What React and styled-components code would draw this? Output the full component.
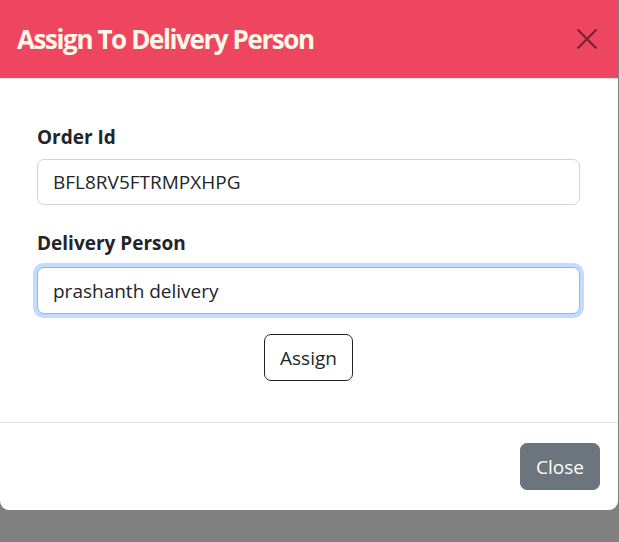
import React from 'react';
import styled, { createGlobalStyle } from 'styled-components';

const GlobalStyle = createGlobalStyle`
  html, body {
    margin: 0;
    padding: 0;
    background: #808080;
    font-family: "Open Sans", "Noto Sans", sans-serif;
    color: #212529;
  }
  * { box-sizing: border-box; }
`;

const Page = styled.div`
  width: 619px;
  height: 542px;
  background: #808080;
`;

const Modal = styled.div`
  width: 618px;
  background: #fff;
  border-radius: 0 0 9px 9px;
  overflow: hidden;
`;

const Header = styled.header`
  height: 79px;
  background: #ee4661;
  border-bottom: 1px solid #dee2e6;
  display: flex;
  align-items: center;
  justify-content: space-between;
  padding: 0 18px 0 17px;
`;

const Title = styled.h3`
  margin: 0;
  font-size: 26px;
  font-weight: 700;
  color: #fff8e6;
  letter-spacing: -1.4px;
`;

const CloseX = styled.button`
  width: 26px;
  height: 26px;
  padding: 0;
  border: 0;
  background: none;
  display: flex;
  align-items: center;
  justify-content: center;
  cursor: pointer;
  svg { display: block; }
`;

const Body = styled.form`
  padding: 44px 38px 41px 37px;
  display: flex;
  flex-direction: column;
`;

const Label = styled.label`
  display: block;
  font-size: 19px;
  font-weight: 700;
  line-height: 29px;
  margin-bottom: ${(p) => p.$gap || 7}px;
`;

const Input = styled.input`
  width: 100%;
  height: ${(p) => (p.$focus ? 47 : 46)}px;
  padding: 0 15px;
  font-family: inherit;
  font-size: 19px;
  color: #212529;
  background: #fff;
  border: 1px solid ${(p) => (p.$focus ? '#86b7fe' : '#ced4da')};
  border-radius: 7px;
  outline: none;
  box-shadow: ${(p) => (p.$focus ? '0 0 0 4px rgba(13, 110, 253, 0.25)' : 'none')};
  margin-bottom: ${(p) => p.$mb || 0}px;
`;

const Center = styled.div`
  display: flex;
  justify-content: center;
`;

const OutlineButton = styled.button`
  height: 47px;
  padding: 0 15px;
  font-family: inherit;
  font-size: 19px;
  color: #212529;
  background: #fff;
  border: 1px solid #212529;
  border-radius: 7px;
`;

const Footer = styled.footer`
  border-top: 1px solid #dee2e6;
  padding: 20px 18px 20px 0;
  display: flex;
  justify-content: flex-end;
`;

const GrayButton = styled.button`
  width: 80px;
  height: 47px;
  font-family: inherit;
  font-size: 19px;
  color: #fff;
  background: #6c757d;
  border: 1px solid #6c757d;
  border-radius: 7px;
`;

export default function App() {
  return (
    <Page>
      <GlobalStyle />
      <Modal>
        <Header>
          <Title>Assign To Delivery Person</Title>
          <CloseX aria-label="Close">
            <svg width="22" height="22" viewBox="0 0 22 22">
              <path d="M1.5 1.5 L20.5 20.5 M20.5 1.5 L1.5 20.5" stroke="#772432" strokeWidth="2.2" fill="none" />
            </svg>
          </CloseX>
        </Header>
        <Body onSubmit={(e) => e.preventDefault()}>
          <Label>Order Id</Label>
          <Input defaultValue="BFL8RV5FTRMPXHPG" readOnly $mb={24} />
          <Label $gap={9}>Delivery Person</Label>
          <Input defaultValue="prashanth delivery" readOnly $focus $mb={20} />
          <Center>
            <OutlineButton type="button">Assign</OutlineButton>
          </Center>
        </Body>
        <Footer>
          <GrayButton type="button">Close</GrayButton>
        </Footer>
      </Modal>
    </Page>
  );
}
